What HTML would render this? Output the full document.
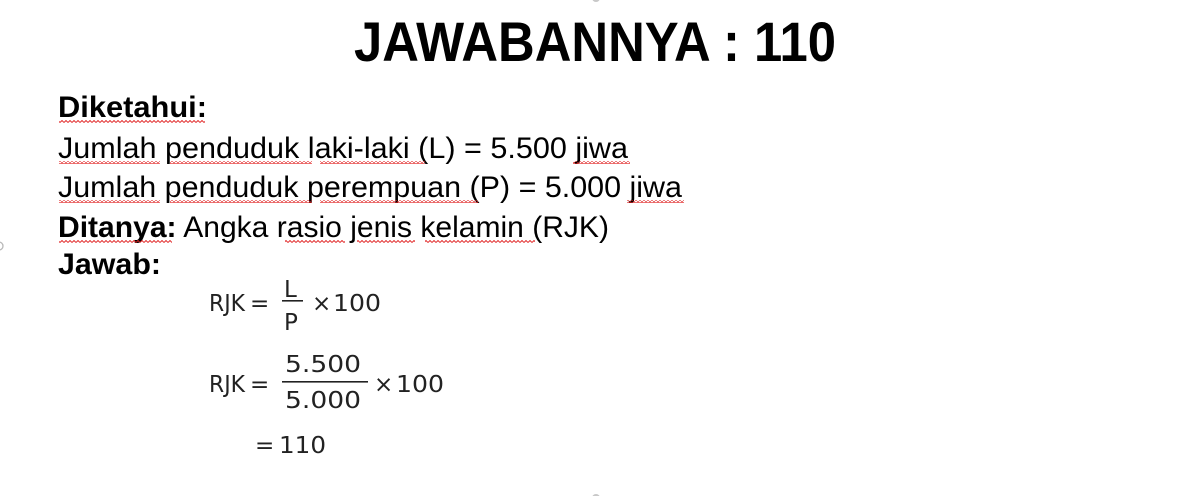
<!DOCTYPE html>
<html><head><meta charset="utf-8"><style>
html,body{margin:0;padding:0;background:#fff;width:1188px;height:496px;overflow:hidden}
svg{display:block}
</style></head><body>
<svg width="1188" height="496" viewBox="0 0 1188 496" xmlns="http://www.w3.org/2000/svg">
<defs>
<pattern id="sq" patternUnits="userSpaceOnUse" width="4" height="3">
<path d="M0,2.5 L2,0.5 L4,2.5" fill="none" stroke="#e02020" stroke-width="0.9"/>
</pattern>
</defs>
<rect width="1188" height="496" fill="#fff"/>
<circle cx="596" cy="-2" r="4" fill="#c8c8c8"/>
<circle cx="596" cy="498" r="4" fill="#c8c8c8"/>
<circle cx="-1" cy="246" r="4" fill="none" stroke="#b8b8b8" stroke-width="1.3"/>
<text x="354" y="61" font-family="Liberation Sans, sans-serif" font-weight="bold" font-size="56" textLength="482" lengthAdjust="spacingAndGlyphs" fill="#000">JAWABANNYA : 110</text>
<g font-family="Liberation Sans, sans-serif" font-size="30" fill="#000">
<text x="58" y="117" font-weight="bold" textLength="149" lengthAdjust="spacingAndGlyphs">Diketahui:</text>
<text x="58" y="158" textLength="570" lengthAdjust="spacingAndGlyphs">Jumlah penduduk laki-laki (L) = 5.500 jiwa</text>
<text x="58" y="197" textLength="624" lengthAdjust="spacingAndGlyphs">Jumlah penduduk perempuan (P) = 5.000 jiwa</text>
<text x="58" y="237" textLength="551" lengthAdjust="spacingAndGlyphs"><tspan font-weight="bold">Ditanya:</tspan> Angka rasio jenis kelamin (RJK)</text>
<text x="58" y="274" font-weight="bold" textLength="103" lengthAdjust="spacingAndGlyphs">Jawab:</text>
</g>
<g fill="url(#sq)">
<rect x="59" y="120" width="146" height="3"/>
<rect x="59" y="161" width="101" height="3"/>
<rect x="170" y="161" width="142" height="3"/>
<rect x="320" y="161" width="105" height="3"/>
<rect x="573" y="161" width="57" height="3"/>
<rect x="59" y="200" width="101" height="3"/>
<rect x="170" y="200" width="142" height="3"/>
<rect x="320" y="200" width="158" height="3"/>
<rect x="627" y="200" width="57" height="3"/>
<rect x="59" y="240" width="113" height="3"/>
<rect x="285" y="240" width="60" height="3"/>
<rect x="357" y="240" width="58" height="3"/>
<rect x="425" y="240" width="110" height="3"/>
</g>
<g font-family="DejaVu Sans, sans-serif" font-size="23" fill="#222">
<text x="209" y="311" textLength="36" lengthAdjust="spacingAndGlyphs">RJK</text>
<text x="250" y="311">=</text>
<text x="284" y="297">L</text>
<rect x="282" y="300" width="21" height="1.6" fill="#222"/>
<text x="284" y="330">P</text>
<text x="312" y="311">×</text>
<text x="333" y="311" textLength="48" lengthAdjust="spacingAndGlyphs">100</text>
<text x="209" y="392" textLength="36" lengthAdjust="spacingAndGlyphs">RJK</text>
<text x="250" y="392">=</text>
<text x="285" y="372" textLength="76" lengthAdjust="spacingAndGlyphs">5.500</text>
<rect x="282" y="381" width="86" height="1.6" fill="#222"/>
<text x="285" y="408" textLength="76" lengthAdjust="spacingAndGlyphs">5.000</text>
<text x="374" y="392">×</text>
<text x="396" y="392" textLength="48" lengthAdjust="spacingAndGlyphs">100</text>
<text x="255" y="453">=</text>
<text x="279" y="453" textLength="47" lengthAdjust="spacingAndGlyphs">110</text>
</g>
</svg>
</body></html>
